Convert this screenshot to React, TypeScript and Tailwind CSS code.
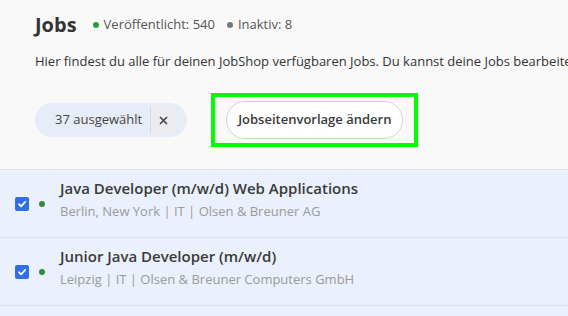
import React from "react";

type Job = { title: string; meta: string };

const jobs: Job[] = [
  { title: "Java Developer (m/w/d) Web Applications", meta: "Berlin, New York | IT | Olsen & Breuner AG" },
  { title: "Junior Java Developer (m/w/d)", meta: "Leipzig | IT | Olsen & Breuner Computers GmbH" },
];

const CheckBox: React.FC = () => (
  <span className="flex h-[14px] w-[14px] items-center justify-center rounded-[2px] bg-[#2f6fe8]">
    <svg width="10" height="10" viewBox="0 0 10 10" fill="none">
      <path d="M2 5.2 4.1 7.3 8.2 2.8" stroke="white" strokeWidth="1.8" strokeLinecap="round" strokeLinejoin="round" />
    </svg>
  </span>
);

const JobRow: React.FC<{ job: Job }> = ({ job }) => (
  <div className="flex h-[68px] border-b border-[#dde2ea] bg-[#eaf0fc]">
    <div className="ml-[15px] self-center">
      <CheckBox />
    </div>
    <span className="ml-[10px] h-[6px] w-[6px] self-center rounded-full bg-[#2e8b3a]" />
    <div className="ml-[15px] flex flex-col pt-[8px]">
      <span className="text-[15px] font-semibold leading-[20px] text-[#3a3a3a]">{job.title}</span>
      <span className="mt-[5px] text-[13px] leading-[17px] text-[#9a9a9a]">{job.meta}</span>
    </div>
  </div>
);

export default function App() {
  return (
    <div className="flex h-[316px] w-[568px] flex-col overflow-hidden bg-[#eaf0fc] font-['Open_Sans',sans-serif]">
      <div className="border-b border-[#e2e2e2] bg-[#f9f9f9] pl-[35px]">
        <div className="flex items-center pt-[12px]">
          <h1 className="text-[20px] font-bold leading-[26px] text-[#333]">Jobs</h1>
          <span className="ml-[16px] h-[6px] w-[6px] rounded-full bg-[#2e9b3a]" />
          <span className="ml-[5px] text-[13px] text-[#555]">Veröffentlicht: 540</span>
          <span className="ml-[12px] h-[6px] w-[6px] rounded-full bg-[#777]" />
          <span className="ml-[5px] text-[13px] text-[#555]">Inaktiv: 8</span>
        </div>
        <div className="mt-[14px] overflow-hidden whitespace-nowrap text-[13px] leading-[18px] text-[#333]">
          Hier findest du alle für deinen JobShop verfügbaren Jobs. Du kannst deine Jobs bearbeiten und verwalten.
        </div>
        <div className="mt-[23px] flex items-center pb-[22px]">
          <div className="flex h-[34px] items-center rounded-full bg-[#e6ecf8] pl-[20px] pr-[12px]">
            <span className="text-[13px] text-[#444]">37 ausgewählt</span>
            <button className="ml-[8px] flex h-[28px] w-[25px] items-center justify-center border-l border-[#d8dbe2] bg-[#ececf0] text-[#444]">
              <svg width="9" height="9" viewBox="0 0 9 9">
                <path d="M1 1 8 8M8 1 1 8" stroke="#444" strokeWidth="1.6" />
              </svg>
            </button>
          </div>
          <div className="ml-[24px] border-4 border-[#00ff00] px-[11px] py-[4px]">
            <button className="h-[38px] rounded-full border border-[#d4d4d4] bg-white px-[11px] text-[13px] font-semibold text-[#3a3a3a]">
              Jobseitenvorlage ändern
            </button>
          </div>
        </div>
      </div>
      {jobs.map((job) => (
        <JobRow key={job.title} job={job} />
      ))}
    </div>
  );
}
